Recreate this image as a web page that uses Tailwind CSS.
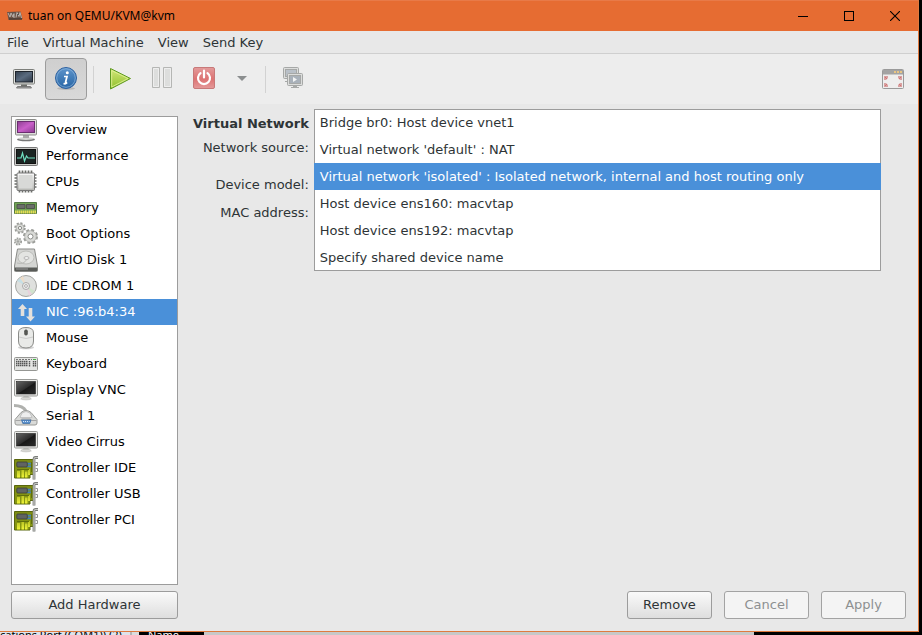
<!DOCTYPE html>
<html lang="en">
<head>
<meta charset="utf-8">
<title>tuan on QEMU/KVM@kvm</title>
<script src="https://cdn.jsdelivr.net/npm/@tailwindcss/browser@4"></script>
</head>
<body class="flex h-screen flex-col overflow-hidden bg-black font-['DejaVu_Sans',sans-serif] text-[13px] leading-4 text-[#2e3436]">
<svg class="absolute size-0" aria-hidden="true">
  <defs>
    <linearGradient id="gp" x1="0" y1="0" x2="1" y2="1"><stop offset="0" stop-color="#8e3f92"/><stop offset=".5" stop-color="#c95fc9"/><stop offset="1" stop-color="#8a3a90"/></linearGradient>
    <linearGradient id="gm" x1="0" y1="0" x2="0" y2="1"><stop offset="0" stop-color="#fafafa"/><stop offset="1" stop-color="#b4b5b1"/></linearGradient>
    <linearGradient id="gd" x1="0" y1="0" x2="1" y2="1"><stop offset="0" stop-color="#666"/><stop offset=".5" stop-color="#2e2e2e"/><stop offset=".55" stop-color="#181818"/><stop offset="1" stop-color="#2c2c2c"/></linearGradient>
    <linearGradient id="gs" x1="0" y1="0" x2="1" y2="1"><stop offset="0" stop-color="#33404f"/><stop offset=".5" stop-color="#5a6b7f"/><stop offset="1" stop-color="#2c3644"/></linearGradient>
    <linearGradient id="gi" x1="0" y1="0" x2="0" y2="1"><stop offset="0" stop-color="#5d94cb"/><stop offset="1" stop-color="#2765a5"/></linearGradient>
    <linearGradient id="gg" x1="0" y1="0" x2="0" y2="1"><stop offset="0" stop-color="#d3e678"/><stop offset="1" stop-color="#8fc02c"/></linearGradient>
    <linearGradient id="gr" x1="0" y1="0" x2="0" y2="1"><stop offset="0" stop-color="#e39b9b"/><stop offset=".55" stop-color="#dd7373"/><stop offset="1" stop-color="#e49a9a"/></linearGradient>
    <linearGradient id="gb" x1="0" y1="0" x2="0" y2="1"><stop offset="0" stop-color="#7c8c14"/><stop offset="1" stop-color="#8a9a12"/></linearGradient>
    <linearGradient id="gy" x1="0" y1="0" x2="0" y2="1"><stop offset="0" stop-color="#b5bf22"/><stop offset="1" stop-color="#f0f53a"/></linearGradient>
    <symbol id="screen" viewBox="0 0 24 24">
      <ellipse cx="12" cy="21" rx="6" ry="1.500" fill="#000" opacity=".12"/>
      <path d="M9.500 18h5l.5 2H9z" fill="#c8c9c6"/><rect x="7.500" y="19.500" width="9" height="1.700" rx=".8" fill="#dededc" stroke="#b8b8b5" stroke-width=".6"/>
      <rect x=".5" y="1.500" width="23" height="16.500" rx="1" fill="#e9e9e7" stroke="#9a9b98"/>
      <rect x="2.500" y="3.500" width="19" height="12.500" fill="url(#gd)" stroke="#222" stroke-width=".6"/>
    </symbol>
    <symbol id="card" viewBox="0 0 24 24">
      <path d="M.5 3.500H20V18.500h-4V22H.5z" fill="url(#gb)" stroke="#59660c"/>
      <path d="M3 15h3v6.500H3zM7.500 14h2.500v7.500H7.500zM11 15.500h2.500v6H11zM14 13h2v6h-2z" fill="url(#gy)"/>
      <path d="M3 13.500h12M17.500 6v10" stroke="#5f6e0c" fill="none"/>
      <path d="M12.500 7.700h4.500M12.500 10.300h4.500" stroke="#4180bd" stroke-width="1.700"/>
      <rect x="2.800" y="6" width="10.500" height="5" rx="1" fill="#606462" stroke="#3a3d3b" stroke-width=".8"/>
      <path d="M24 1.500h-2.500Q20 1.500 20 3.500v20" fill="none" stroke="#7b7d7a" stroke-width="2.800"/>
      <path d="M24 1.500h-2.500Q20 1.500 20 3.500v19.500" fill="none" stroke="#c3c5c1" stroke-width="1.200"/>
      <path d="M21.500 6.500h2v3h-2M21.500 12.500h2v3h-2" fill="none" stroke="#888" stroke-width=".9"/>
    </symbol>
  </defs>
</svg>

<div class="mr-[3px] flex min-h-0 flex-1 flex-col border-r border-b border-[#e07a3f] bg-[#e8e8e8]">
  <header class="flex h-[31px] shrink-0 items-center border-t border-[#e87a48] bg-[#e66c32] pl-[7px] font-['Noto_Sans','Open_Sans',sans-serif] text-xs text-black">
    <svg class="mr-[5px] size-4" viewBox="0 0 16 16" aria-hidden="true"><path d="M0 4 13.500 3.500l2 7.500-14 1z" fill="#6e5448"/><path d="M1 5l2 4 1-4 2 4 1-4v5M9 9.500l1-5 2 4 1-4 1.500 5.500" fill="none" stroke="#b9b2ad" stroke-width="1"/><path d="M2 11h13" stroke="#4a3b35" stroke-width="1.500"/><path d="M5 5h3M10 6.500h2" stroke="#555"/></svg>
    <h1 class="flex-1">tuan on QEMU/KVM@kvm</h1>
    <button type="button" aria-label="Minimize" class="flex h-full w-[46px] items-center justify-center"><svg class="size-[10px]" viewBox="0 0 10 10"><path d="M0 5.500h10" stroke="#000"/></svg></button>
    <button type="button" aria-label="Maximize" class="flex h-full w-[46px] items-center justify-center"><svg class="size-[10px]" viewBox="0 0 10 10"><rect x=".5" y=".5" width="9" height="9" fill="none" stroke="#000"/></svg></button>
    <button type="button" aria-label="Close" class="flex h-full w-[46px] items-center justify-center"><svg class="size-[10px]" viewBox="0 0 10 10"><path d="M0 0l10 10M10 0 0 10" stroke="#000" stroke-width="1.100"/></svg></button>
  </header>

  <nav class="flex h-[23px] shrink-0 items-center gap-[14px] border-b border-[#cfcfcf] px-[7px] pt-px" aria-label="Menu">
    <button type="button">File</button>
    <button type="button">Virtual Machine</button>
    <button type="button">View</button>
    <button type="button">Send Key</button>
  </nav>

  <div class="flex h-[50px] shrink-0 items-center bg-[#ededed] pr-[13px] pl-[3px]" role="toolbar" aria-label="Machine controls">
    <button type="button" aria-label="Console" class="flex size-[42px] items-center justify-center">
      <svg class="size-6" viewBox="0 0 24 24"><rect x="1.500" y="2.500" width="21" height="14.500" rx="1" fill="#e2e3e0" stroke="#7c7e7a"/><rect x="3.500" y="4.500" width="17" height="10.500" fill="url(#gs)" stroke="#1e242c"/><path d="M9 17.500h6v2H9z" fill="#6d6f6b"/><path d="M5.500 19.500h13l1 1.500h-15z" fill="#aaa" stroke="#666" stroke-width=".8"/></svg>
    </button>
    <button type="button" aria-label="Details" aria-pressed="true" class="flex size-[42px] items-center justify-center rounded-sm border border-[#9c9c9c] bg-linear-to-b from-[#cfcfcf] to-[#d9d9d9]">
      <svg class="size-6" viewBox="0 0 24 24"><ellipse cx="12" cy="21.500" rx="9" ry="1.500" fill="#000" opacity=".15"/><circle cx="12" cy="11" r="10.500" fill="url(#gi)" stroke="#2f62a0"/><circle cx="12" cy="11" r="9.300" fill="none" stroke="#8fb7de" stroke-width=".7"/><circle cx="13.300" cy="5.800" r="1.500" fill="#fff"/><path d="M10 9.500h3l-1.500 6q-.2 1.200 1.700 0M9.500 16.500q2 .8 3.200-.5" fill="none" stroke="#fff" stroke-width="1.700"/></svg>
    </button>
    <div class="mx-[6px] h-[27px] w-px bg-[#d2d2d2]"></div>
    <button type="button" aria-label="Run" class="flex size-[40px] items-center justify-center">
      <svg class="size-6" viewBox="0 0 24 24"><path d="M2.500 1.500v20.500L22.500 11.500z" fill="url(#gg)" stroke="#5f9a22" stroke-linejoin="round"/><path d="M3.700 3.500v16.500L20 11.500z" fill="none" stroke="#e3f29b" stroke-width=".8"/></svg>
    </button>
    <button type="button" aria-label="Pause" class="flex h-[42px] w-[43px] items-center justify-center pb-[2px]">
      <svg class="size-6" viewBox="0 0 24 24"><g fill="#dddedd" stroke="#b5b6b4"><path d="M2.500 1.500h7v20h-7zM13.500 1.500h8v20h-8z"/></g><path d="M3.500 2.500h5v18h-5zM14.500 2.500h6v18h-6z" fill="none" stroke="#eee"/></svg>
    </button>
    <button type="button" aria-label="Shut down" class="flex size-[42px] items-center justify-center pb-[2px]">
      <svg class="size-6" viewBox="0 0 24 24"><rect x="1.500" y="1.500" width="21" height="21" rx="1.500" fill="url(#gr)" stroke="#c87979"/><path d="M8.500 7.200a6 6 0 1 0 7 0M12 4.500v7" fill="none" stroke="#fff" stroke-width="2.200" stroke-linecap="round"/></svg>
    </button>
    <button type="button" aria-label="Shut down options" class="flex h-[42px] w-[34px] items-center justify-center pb-[2px]">
      <svg class="h-[5px] w-[10px]" viewBox="0 0 10 5"><path d="M0 0h10L5 5z" fill="#8b8e8f"/></svg>
    </button>
    <div class="mx-[6px] h-[27px] w-px bg-[#d2d2d2]"></div>
    <button type="button" aria-label="Snapshots" class="flex size-[41px] items-center justify-center pb-[2px]">
      <svg class="size-6" viewBox="0 0 24 24"><g stroke="#a6a8a7" fill="#dcdddc"><rect x="2.500" y="1.500" width="15" height="11" rx="1"/><rect x="4.500" y="3.500" width="11" height="7" fill="#b9c0c8"/><path d="M4 15.500h3"/><rect x="6.500" y="7.500" width="15" height="12" rx="1"/><rect x="8.500" y="9.500" width="11" height="8" fill="#a9b1ba"/><path d="M10 21.500h8M12 20.500h4"/></g><path d="M12 11v5l4-2.500z" fill="#f2f3f4"/></svg>
    </button>
    <button type="button" aria-label="Fullscreen" class="ml-auto flex h-[42px] items-center justify-center pr-px">
      <svg class="size-[22px]" viewBox="0 0 22 22"><rect x=".5" y="1.500" width="21" height="19" rx="1" fill="#eee" stroke="#9a9a9a"/><path d="M1 2h20v4.500H1z" fill="#a3a3a3"/><path d="M12 3h2v2h-2zM15 3h2v2h-2zM18 3h2v2h-2z" fill="#e9c583"/><g fill="#d9a0a0"><path d="M2 8h4v2.500H4.500V12H2zM20 8h-4v2.500h1.500V12H20zM2 19h4v-2.500H4.500V15H2zM20 19h-4v-2.500h1.500V15H20z"/></g><path d="M3 9l2 2M19 9l-2 2M3 18l2-2M19 18l-2-2" stroke="#cd7474"/></svg>
    </button>
  </div>

  <main class="flex min-h-0 flex-1 flex-col pr-3 pb-3 pl-[11px]">
    <div class="flex min-h-0 flex-1 gap-[15px]">
      <ul class="mt-3 w-[167px] shrink-0 border border-[#9c9c9c] bg-white text-black" role="listbox" aria-label="Hardware">
        <li role="option" class="flex h-[26px] items-center gap-2 px-[2px]">
          <svg class="size-6" viewBox="0 0 24 24"><ellipse cx="12" cy="21.500" rx="9" ry="1.800" fill="#777"/><ellipse cx="12" cy="20.500" rx="8" ry="1.400" fill="#d5d6d3"/><path d="M9 17h6v3H9z" fill="#aaa"/><rect x="1.500" y="1.500" width="21" height="15.500" rx="1" fill="#dcddda" stroke="#8b8c89"/><rect x="3.500" y="3.500" width="17" height="11" fill="url(#gp)" stroke="#6b2e70"/></svg>Overview</li>
        <li role="option" class="flex h-[26px] items-center gap-2 px-[2px]">
          <svg class="size-6" viewBox="0 0 24 24"><rect x=".5" y="3.500" width="23" height="18" rx="1" fill="#c9cac7" stroke="#777"/><rect x="2.500" y="5.500" width="19" height="14" fill="#1b2523" stroke="#111"/><path d="M3 14h4l1.500-5 2 8 2-5 1.500 2H21" fill="none" stroke="#6fe0c0" stroke-width="1.200"/></svg>Performance</li>
        <li role="option" class="flex h-[26px] items-center gap-2 px-[2px]">
          <svg class="size-6" viewBox="0 0 24 24"><path d="M5.500.5v22M8.500.5v22M11.500.5v22M14.500.5v22M17.500.5v22M.5 5h22M.5 8h22M.5 11h22M.5 14h22M.5 17h22" stroke="#6b6d69" stroke-width="1.700"/><rect x="3" y="3" width="17.500" height="17.500" rx="1" fill="url(#gm)" stroke="#777"/><rect x="5" y="5" width="13.500" height="13.500" fill="#d8d9d7"/></svg>CPUs</li>
        <li role="option" class="flex h-[26px] items-center gap-2 px-[2px]">
          <svg class="size-6" viewBox="0 0 24 24"><path d="M.5 6.500h22v11H.5z" fill="#71a355" stroke="#547a46"/><path d="M3 8.500h8v4H3zM12.500 8.500h8v4h-8z" fill="#6b6e6a" stroke="#484b47" stroke-width=".8"/><path d="M1 16h21" stroke="#e5dc53" stroke-width="3" stroke-dasharray="1.500 .5"/></svg>Memory</li>
        <li role="option" class="flex h-[26px] items-center gap-2 px-[2px]">
          <svg class="size-6" viewBox="0 0 24 24"><g fill="none" stroke="#999b97"><circle cx="6" cy="6" r="4.500" stroke-width="2.500" stroke-dasharray="2 1.500"/><circle cx="16.500" cy="14.500" r="6" stroke-width="3" stroke-dasharray="2.700 2"/><circle cx="4" cy="19.500" r="3" stroke-width="2" stroke-dasharray="1.500 1"/></g><g fill="#d9dad7" stroke="#a9aba7" stroke-width=".8"><circle cx="6" cy="6" r="4"/><circle cx="16.500" cy="14.500" r="5.800"/><circle cx="4" cy="19.500" r="2.500"/></g><g fill="#fff" stroke="#8b8d89"><circle cx="6" cy="6" r="1.600"/><circle cx="16.500" cy="14.500" r="2.500"/><circle cx="4" cy="19.500" r=".8"/></g></svg>Boot Options</li>
        <li role="option" class="flex h-[26px] items-center gap-2 px-[2px]">
          <svg class="size-6" viewBox="0 0 24 24"><path d="M3.500 1h17l3 17v4.500q0 1-1 1h-21q-1 0-1-1V18z" fill="#d4d5d3" stroke="#898a87"/><path d="M.8 19.500h22.400v3.500H.8z" fill="#595b58"/><path d="M2 21h12" stroke="#999"/><ellipse cx="12" cy="9.500" rx="8" ry="6.500" fill="#e3e4e2" stroke="#bcbdba"/><ellipse cx="12.500" cy="10" rx="2.500" ry="1.500" fill="#eee" stroke="#aaa" stroke-width=".8"/><path d="M3 15q7 2 10-4" fill="none" stroke="#b9bab7"/></svg>VirtIO Disk 1</li>
        <li role="option" class="flex h-[26px] items-center gap-2 px-[2px]">
          <svg class="size-6" viewBox="0 0 24 24"><circle cx="12" cy="12" r="10.500" fill="#dfe0de" stroke="#a4a5a2"/><path d="M12 12 3 7l3-3z" fill="#c6dfe5"/><path d="m12 12-6-8 3-2z" fill="#eddcc8"/><path d="m12 12 9 5-3 3z" fill="#d0e3cc"/><path d="m12 12 6 8-3 2z" fill="#e8d2dd"/><circle cx="12" cy="12" r="3.500" fill="#ededec" stroke="#aaa"/><circle cx="12" cy="12" r="1.400" fill="#fff" stroke="#aaa"/></svg>IDE CDROM 1</li>
        <li role="option" aria-selected="true" class="flex h-[26px] items-center gap-2 bg-[#4a90d9] px-[2px] text-white">
          <svg class="size-6" viewBox="0 0 24 24"><path d="M8.500 4 13 9h-2.700v7H6.700V9H4zM16.500 21.500 12 16.500h2.700V8h3.600v8.500H21z" fill="#e5e1dc"/></svg>NIC :96:b4:34</li>
        <li role="option" class="flex h-[26px] items-center gap-2 px-[2px]">
          <svg class="size-6" viewBox="0 0 24 24"><ellipse cx="12" cy="21.500" rx="8" ry="1.800" fill="#000" opacity=".18"/><path d="M4.500 7q0-5.500 7.500-5.500T19.500 7v8q0 7-7.500 7t-7.500-7z" fill="#e9eae8" stroke="#8a8b88"/><path d="M5 11q7 3 14 0M12 2v3" fill="none" stroke="#ccc"/><rect x="10.200" y="3.500" width="3.600" height="6" rx="1.700" fill="#555753"/></svg>Mouse</li>
        <li role="option" class="flex h-[26px] items-center gap-2 px-[2px]">
          <svg class="size-6" viewBox="0 0 24 24"><rect x=".5" y="5.500" width="23" height="13" rx="1" fill="#e4e5e3" stroke="#959693"/><path d="M2 9.500h12M2 11.500h12M2 13.500h12" stroke="#555" stroke-width="1.500" stroke-dasharray="1.500 .5"/><path d="M2 7.500h16" stroke="#777" stroke-dasharray="2 1"/><path d="M15.500 9v6M19.500 9v6M21.500 9v6" stroke="#555" stroke-width="1.400" stroke-dasharray="1.400 .6"/><path d="M19 7.500h3" stroke="#47b547"/></svg>Keyboard</li>
        <li role="option" class="flex h-[26px] items-center gap-2 px-[2px]"><svg class="size-6"><use href="#screen"/></svg>Display VNC</li>
        <li role="option" class="flex h-[26px] items-center gap-2 px-[2px]">
          <svg class="size-6" viewBox="0 0 24 24"><path d="M0 1.500q9 0 12 5.500" fill="none" stroke="#b0b1ae" stroke-width="3"/><path d="M7 8.500q5-4 10 0l6 7v3.500q0 2-2 2H3q-2 0-2-2v-3.500z" fill="#d9dad8" stroke="#999a97"/><path d="M8 9q4-3 8 0l2 4.500H6z" fill="#eee" stroke="#b5b5b5" stroke-width=".7"/><path d="M1.500 16.500h5l1-1.500h9l1 1.500h5" fill="none" stroke="#a5a5a5"/><path d="M7.500 16h9.500l-1.200 3.500h-7z" fill="#5a90cc" stroke="#3a689f" stroke-width=".7"/><path d="M9 17.500h6.500" stroke="#d6e6f6" stroke-dasharray="1 1"/></svg>Serial 1</li>
        <li role="option" class="flex h-[26px] items-center gap-2 px-[2px]"><svg class="size-6"><use href="#screen"/></svg>Video Cirrus</li>
        <li role="option" class="flex h-[26px] items-center gap-2 px-[2px]"><svg class="size-6"><use href="#card"/></svg>Controller IDE</li>
        <li role="option" class="flex h-[26px] items-center gap-2 px-[2px]"><svg class="size-6"><use href="#card"/></svg>Controller USB</li>
        <li role="option" class="flex h-[26px] items-center gap-2 px-[2px]"><svg class="size-6"><use href="#card"/></svg>Controller PCI</li>
      </ul>

      <form class="mt-[5px] flex flex-1 items-start gap-[5px] pr-[25px]">
        <div class="flex shrink-0 flex-col items-end pt-[7px]">
          <h2 class="mb-2 font-bold">Virtual Network</h2>
          <span id="source-label" class="mb-[21px]">Network source:</span>
          <span class="mb-3">Device model:</span>
          <span>MAC address:</span>
        </div>
        <div class="min-w-0 flex-1 bg-white inset-ring inset-ring-[#9c9c9c]" role="listbox" aria-labelledby="source-label">
          <button type="button" role="option" class="block h-[27px] w-full px-[6px] text-left">Bridge br0: Host device vnet1</button>
          <button type="button" role="option" class="block h-[27px] w-full px-[6px] text-left">Virtual network 'default' : NAT</button>
          <button type="button" role="option" aria-selected="true" class="block h-[27px] w-full bg-[#4a90d9] px-[6px] text-left text-white">Virtual network 'isolated' : Isolated network, internal and host routing only</button>
          <button type="button" role="option" class="block h-[27px] w-full px-[6px] text-left">Host device ens160: macvtap</button>
          <button type="button" role="option" class="block h-[27px] w-full px-[6px] text-left">Host device ens192: macvtap</button>
          <button type="button" role="option" class="block h-[27px] w-full px-[6px] text-left">Specify shared device name</button>
        </div>
      </form>
    </div>

    <footer class="mt-[6px] flex h-7 shrink-0 gap-3">
      <button type="button" class="mr-auto w-[167px] rounded-[3px] border border-[#9c9c9c] bg-linear-to-b from-[#fafafa] to-[#dedede]">Add Hardware</button>
      <button type="button" class="w-[85px] rounded-[3px] border border-[#9c9c9c] bg-linear-to-b from-[#fafafa] to-[#dedede]">Remove</button>
      <button type="button" disabled class="w-[85px] rounded-[3px] border border-[#a3a3a3] bg-[#f4f4f4] text-[#8d9091]">Cancel</button>
      <button type="button" disabled class="w-[85px] rounded-[3px] border border-[#a3a3a3] bg-[#f4f4f4] text-[#8d9091]">Apply</button>
    </footer>
  </main>
</div>

<div class="flex h-[3px] shrink-0 overflow-hidden font-['Noto_Sans','Open_Sans',sans-serif] text-[11px] leading-[6px] text-black">
  <div class="w-[132px] shrink-0 border-r-2 border-[#b5b5b5] bg-[#dfe3ea]">cations Port (COM1)) (2)</div>
  <div class="w-[7px] shrink-0 bg-[#dcdcdc]"></div>
  <div class="w-[65px] shrink-0 bg-black pl-[9px] text-white">Name</div>
  <div class="w-[550px] bg-[#c8c8c8]"></div>
</div>
</body>
</html>
